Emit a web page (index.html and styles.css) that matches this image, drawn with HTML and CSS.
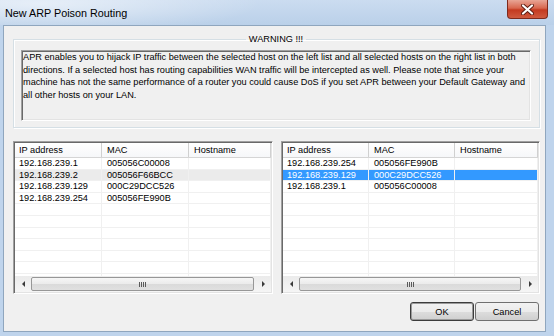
FILE: index.html
```html
<!DOCTYPE html>
<html lang="en">
<head>
    <meta charset="UTF-8">
    <title>New ARP Poison Routing</title>
    <link rel="stylesheet" href="styles.css">
</head>
<body>
    <div class="window">
        <div class="titlebar">
            <span class="title">New ARP Poison Routing</span>
            <button class="close">
                <svg width="13" height="11" viewBox="0 0 13 11">
                    <path d="M2 1.5 L11 9.5 M11 1.5 L2 9.5" stroke="#5b1c12" stroke-width="4" stroke-linecap="round"/>
                    <path d="M2 1.5 L11 9.5 M11 1.5 L2 9.5" stroke="#ffffff" stroke-width="2.2" stroke-linecap="round"/>
                </svg>
            </button>
        </div>

        <div class="frame">
            <div class="client">
                <fieldset class="group">
                    <legend>WARNING !!!</legend>
                    <div class="edit">APR enables you to hijack IP traffic between the selected host on the left list and all selected hosts on the right list in both<br>directions. If a selected host has routing capabilities WAN traffic will be intercepted as well. Please note that since your<br>machine has not the same performance of a router you could cause DoS if you set APR between your Default Gateway and<br>all other hosts on your LAN.</div>
                </fieldset>

                <div class="lists">
                    <!-- left list: all hosts -->
                    <div class="listview left">
                        <div class="lv-head"><span>IP address</span><span>MAC</span><span>Hostname</span></div>
                        <div class="lv-body">
                            <div class="lv-row"><span>192.168.239.1</span><span>005056C00008</span><span></span></div>
                            <div class="lv-row inactive"><span>192.168.239.2</span><span>005056F66BCC</span><span></span></div>
                            <div class="lv-row"><span>192.168.239.129</span><span>000C29DCC526</span><span></span></div>
                            <div class="lv-row"><span>192.168.239.254</span><span>005056FE990B</span><span></span></div>
                            <div class="lv-row"><span></span><span></span><span></span></div>
                            <div class="lv-row"><span></span><span></span><span></span></div>
                            <div class="lv-row"><span></span><span></span><span></span></div>
                            <div class="lv-row"><span></span><span></span><span></span></div>
                            <div class="lv-row"><span></span><span></span><span></span></div>
                            <div class="lv-row"><span></span><span></span><span></span></div>
                            <div class="lv-row"><span></span><span></span><span></span></div>
                        </div>
                        <div class="hscroll">
                            <div class="arrow l"></div>
                            <div class="thumb"></div>
                            <div class="arrow r"></div>
                        </div>
                    </div>

                    <!-- right list: hosts to poison -->
                    <div class="listview right">
                        <div class="lv-head"><span>IP address</span><span>MAC</span><span>Hostname</span></div>
                        <div class="lv-body">
                            <div class="lv-row"><span>192.168.239.254</span><span>005056FE990B</span><span></span></div>
                            <div class="lv-row sel"><span>192.168.239.129</span><span>000C29DCC526</span><span></span></div>
                            <div class="lv-row"><span>192.168.239.1</span><span>005056C00008</span><span></span></div>
                            <div class="lv-row"><span></span><span></span><span></span></div>
                            <div class="lv-row"><span></span><span></span><span></span></div>
                            <div class="lv-row"><span></span><span></span><span></span></div>
                            <div class="lv-row"><span></span><span></span><span></span></div>
                            <div class="lv-row"><span></span><span></span><span></span></div>
                            <div class="lv-row"><span></span><span></span><span></span></div>
                            <div class="lv-row"><span></span><span></span><span></span></div>
                            <div class="lv-row"><span></span><span></span><span></span></div>
                        </div>
                        <div class="hscroll">
                            <div class="arrow l"></div>
                            <div class="thumb"></div>
                            <div class="arrow r"></div>
                        </div>
                    </div>
                </div>

                <div class="buttons">
                    <button class="btn default">OK</button>
                    <button class="btn">Cancel</button>
                </div>
            </div>
        </div>
    </div>
</body>
</html>
```

FILE: styles.css
```css
body {
    margin: 0;
    font-family: "Liberation Sans", Arial, sans-serif;
    font-size: 9.2px;
    color: #000000;
}
.window {
    width: 554px;
    height: 336px;
    display: flex;
    flex-direction: column;
    background: #bfd4ec;
}
.titlebar {
    height: 25px;
    flex: none;
    display: flex;
    justify-content: space-between;
    align-items: flex-start;
    background: radial-gradient(ellipse 220px 30px at 40px 4px, rgba(255,255,255,0.55), rgba(255,255,255,0) 100%),
                linear-gradient(#cbdcf0, #bad0e9);
}
.title {
    font-size: 10.8px;
    line-height: 13px;
    padding: 7px 0 0 5px;
}
.close {
    width: 41px;
    height: 19px;
    margin-right: 6px;
    padding: 0;
    border: 1px solid #7e2a1c;
    border-top: none;
    border-radius: 0 0 4px 4px;
    background: linear-gradient(#e8a595, #d8674f 45%, #c43a20 55%, #cf5a3f);
    display: flex;
    align-items: center;
    justify-content: center;
}
.frame {
    flex: 1;
    display: flex;
    padding: 0 8px 4px 3px;
}
.client {
    flex: 1;
    display: flex;
    flex-direction: column;
    border: 1px solid #8fa6be;
    background: #f0f0f0;
    padding: 7px 5px 10px 9px;
}
.group {
    margin: 0;
    padding: 5px 8px 6px 7px;
    border: 1px solid #d5dfe5;
    box-shadow: inset 1px 1px #ffffff, 1px 1px #ffffff;
    min-width: 0;
}
.group legend {
    margin: 0 auto;
    padding: 0 3px;
    line-height: 12px;
}
.edit {
    height: 71px;
    box-sizing: border-box;
    border: 1px solid;
    border-color: #a0a0a0 #ffffff #ffffff #a0a0a0;
    box-shadow: inset 1px 1px #696969, inset -1px -1px #e3e3e3;
    padding: 0 1px 0 1px;
    line-height: 12.7px;
    white-space: nowrap;
    overflow: hidden;
}
.lists {
    margin-top: 13px;
    height: 153px;
    display: grid;
    grid-template-columns: 260px 259px;
    gap: 8px;
}
.listview {
    border: 1px solid;
    border-color: #a0a0a0 #ffffff #ffffff #a0a0a0;
    box-shadow: inset 1px 1px #696969, inset -1px -1px #e3e3e3;
    padding: 1px;
    background: #ffffff;
    display: flex;
    flex-direction: column;
    overflow: hidden;
}
.lv-head,
.lv-row {
    display: grid;
}
.left .lv-head,
.left .lv-row {
    grid-template-columns: 87px 87px 1fr;
}
.right .lv-head,
.right .lv-row {
    grid-template-columns: 86px 86px 1fr;
}
.lv-head {
    height: 15px;
    flex: none;
    box-sizing: border-box;
    border-bottom: 1px solid #d5d5d5;
    background: linear-gradient(#ffffff, #f6f7f9);
}
.lv-head span {
    line-height: 14px;
    padding-left: 4px;
    border-right: 1px solid #d0d0d0;
}
.lv-head span + span,
.lv-row span + span {
    padding-left: 5px;
}
.lv-body {
    flex: 1;
    overflow: hidden;
}
.lv-row {
    height: 11.6px;
    box-sizing: border-box;
    border-bottom: 1px solid #f0f0f0;
}
.lv-row span {
    line-height: 11px;
    padding-left: 4px;
    border-right: 1px solid #f0f0f0;
    white-space: nowrap;
    overflow: hidden;
}
.lv-row.inactive {
    background: #ebebeb;
}
.lv-row.sel {
    background: #3399ff;
    color: #ffffff;
}
.hscroll {
    height: 16px;
    flex: none;
    display: flex;
    background: linear-gradient(#ebebeb, #f5f5f5);
}
.arrow {
    width: 16px;
    display: flex;
    align-items: center;
    justify-content: center;
}
.arrow::before {
    content: "";
    border-top: 3px solid transparent;
    border-bottom: 3px solid transparent;
}
.arrow.l::before {
    border-right: 3px solid #3a3a3a;
}
.arrow.r::before {
    border-left: 3px solid #3a3a3a;
}
.thumb {
    flex: 1;
    margin: 1px 1px 1px 0;
    border: 1px solid #979797;
    border-radius: 2px;
    background: linear-gradient(#f6f6f6, #ebebeb 50%, #dadada 51%, #e0e0e0);
    display: flex;
    align-items: center;
    justify-content: center;
}
.thumb::after {
    content: "";
    width: 7px;
    height: 5px;
    background: repeating-linear-gradient(90deg, #5a5a5a 0 1px, transparent 1px 2px);
}
.buttons {
    margin-top: 8px;
    display: flex;
    justify-content: flex-end;
    gap: 1px;
    padding-right: 1px;
}
.btn {
    width: 64px;
    height: 19px;
    padding: 0;
    font: inherit;
    color: #000000;
    border: 1px solid #707070;
    border-radius: 3px;
    background: linear-gradient(#f2f2f2, #ebebeb 50%, #dddddd 51%, #cfcfcf);
}
.btn.default {
    border-color: #3c3c3c;
    box-shadow: inset 0 0 0 1px #9a9a9a;
}
```
